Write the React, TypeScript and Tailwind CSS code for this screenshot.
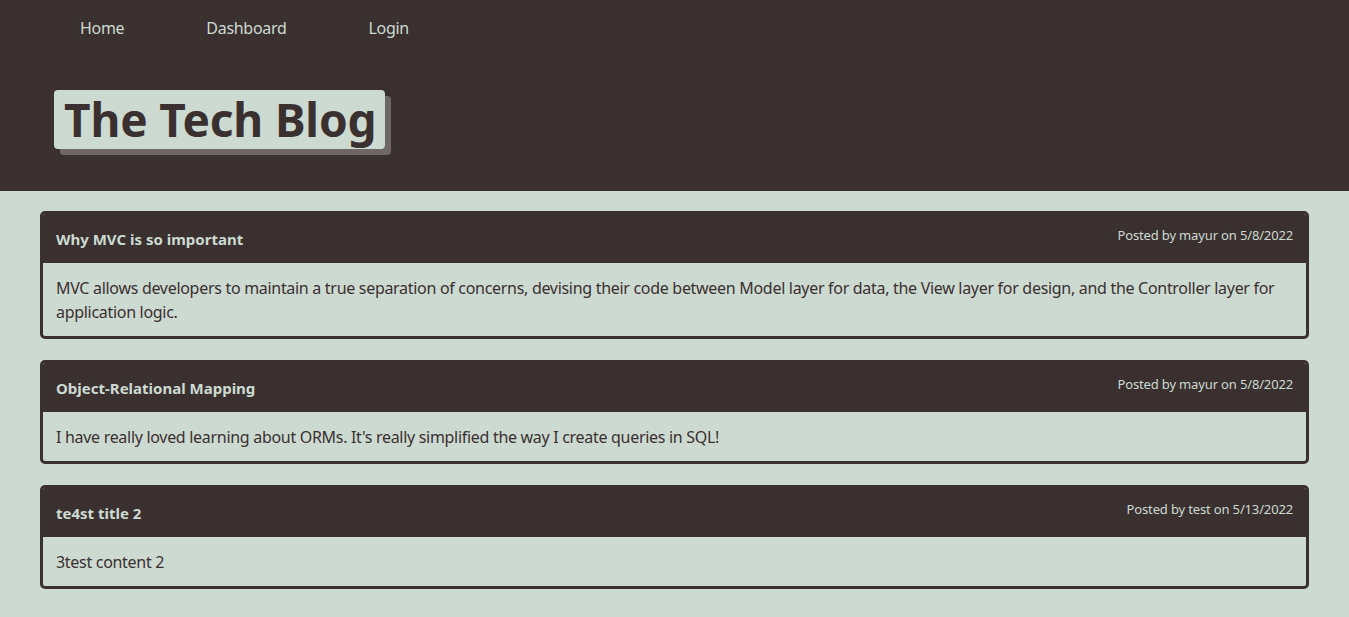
export default function App() {
  const posts = [
    {
      title: 'Why MVC is so important',
      meta: 'Posted by mayur on 5/8/2022',
      body: 'MVC allows developers to maintain a true separation of concerns, devising their code between Model layer for data, the View layer for design, and the Controller layer for application logic.',
    },
    {
      title: 'Object-Relational Mapping',
      meta: 'Posted by mayur on 5/8/2022',
      body: "I have really loved learning about ORMs. It's really simplified the way I create queries in SQL!",
    },
    {
      title: 'te4st title 2',
      meta: 'Posted by test on 5/13/2022',
      body: '3test content 2',
    },
  ];

  return (
    <main className="min-h-screen bg-[#cddad1] font-['Noto_Sans',sans-serif]">
      {/* header */}
      <header className="bg-[#3a3030] h-[191px]">
        <nav className="flex pl-[39px] pt-[17px] text-[16px] tracking-[-0.3px] text-[#cddad1]">
          <a className="px-[41px] leading-[22px]">Home</a>
          <a className="px-[41px] leading-[22px]">Dashboard</a>
          <a className="px-[41px] leading-[22px]">Login</a>
        </nav>
        <div className="pl-[54px] pt-[51px]">
          <h1 className="inline-block bg-[#cddad1] text-[#3a3030] text-[46px] font-bold leading-[59px] h-[59px] pl-[10px] pr-[9px] tracking-[-0.15px] rounded-[4px] shadow-[6px_6px_0_#6f6765]">
            The Tech Blog
          </h1>
        </div>
      </header>

      {/* posts */}
      <section className="px-[40px] pt-[20px] pb-[30px] space-y-[21px]">
        {posts.map((p) => (
          <article key={p.title} className="border-[3px] border-[#3a3030] rounded-[5px] overflow-hidden">
            <div className="bg-[#3a3030] h-[49px] flex justify-between items-center px-[13px]">
              <h2 className="text-[15px] font-bold text-[#cddad1] pt-[2px]">{p.title}</h2>
              <span className="text-[13px] tracking-[-0.15px] text-[#cddad1] -mt-[5px]">{p.meta}</span>
            </div>
            <p className="px-[13px] pt-[13px] pb-[12px] text-[16px] leading-[24px] tracking-[-0.3px] text-[#3a3030]">{p.body}</p>
          </article>
        ))}
      </section>
    </main>
  );
}
